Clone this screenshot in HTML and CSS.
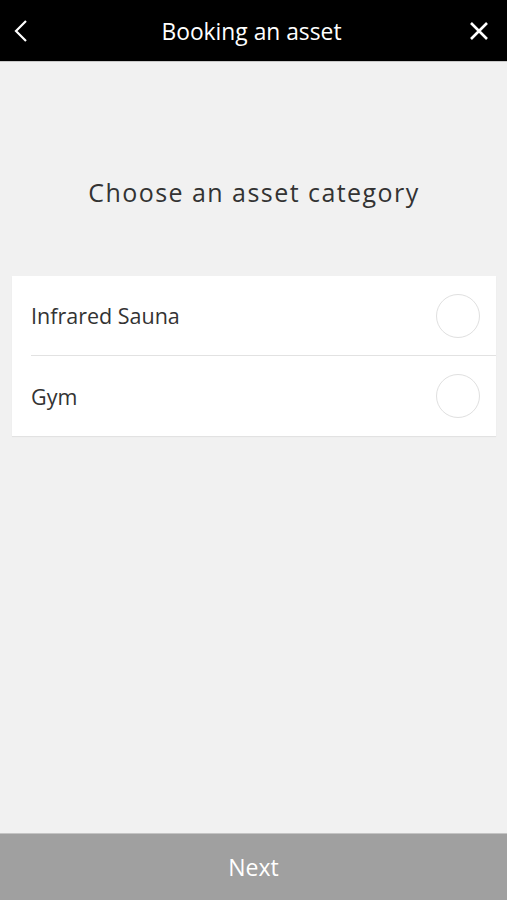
FILE: index.html
```html
<!DOCTYPE html>
<html lang="en">
<head>
    <meta charset="UTF-8">
    <title>Booking an asset</title>
    <link rel="stylesheet" href="styles.css">
</head>
<body>

<div class="screen">
    <div class="topbar">
        <button class="icon-btn back">
            <svg width="16" height="24" viewBox="0 0 16 24"><path d="M13 2 L3 12 L13 22" fill="none" stroke="#fff" stroke-width="2.2"/></svg>
        </button>
        <div class="topbar-title">Booking an asset</div>
        <button class="icon-btn close">
            <svg width="20" height="20" viewBox="0 0 20 20"><path d="M2 2 L18 18 M18 2 L2 18" fill="none" stroke="#fff" stroke-width="2.6"/></svg>
        </button>
    </div>

    <div class="content">
        <h2 class="heading">Choose an asset category</h2>

        <div class="list">
            <div class="list-item">
                <span>Infrared Sauna</span>
                <span class="radio"></span>
            </div>
            <div class="list-item">
                <span>Gym</span>
                <span class="radio"></span>
            </div>
        </div>
    </div>

    <button class="btn-next">Next</button>
</div>

</body>
</html>
```
FILE: styles.css
```css
body { margin: 0; font-family: "Open Sans", sans-serif; background-color: #f1f1f1; }
.screen { display: flex; flex-direction: column; height: 900px; }
.topbar { background: #000; height: 61px; display: grid; grid-template-columns: 1fr auto 1fr; align-items: center; padding: 0 16px 0 9px; border-bottom: 1px solid #c8c8c8; }
.topbar-title { color: #fff; font-size: 22.8px; padding: 2px 0 0 3px; }
.icon-btn { background: none; border: none; padding: 0; width: 24px; height: 24px; display: flex; align-items: center; justify-content: center; }
.close { justify-self: end; }
.content { flex: 1; padding: 0 11px 0 12px; }
.heading { margin: 113px 0 67px; text-align: center; font-weight: normal; font-size: 25px; letter-spacing: 1.45px; color: #333; }
.list { background: #fff; box-shadow: 0 1px 1px rgba(0,0,0,0.06); }
.list-item { height: 79px; margin-left: 19px; display: flex; align-items: center; justify-content: space-between; padding-right: 16px; font-size: 21.5px; color: #333; border-bottom: 1px solid #e2e2e2; }
.list-item:last-child { border-bottom: none; height: 80px; }
.radio { width: 42px; height: 42px; border: 1px solid #e0e0e0; border-radius: 50%; }
.btn-next { height: 67px; border: none; background: #a0a0a0; color: #fff; font-family: "Open Sans", sans-serif; font-size: 23px; border-top: 1px solid #c4c4c4; }
```
